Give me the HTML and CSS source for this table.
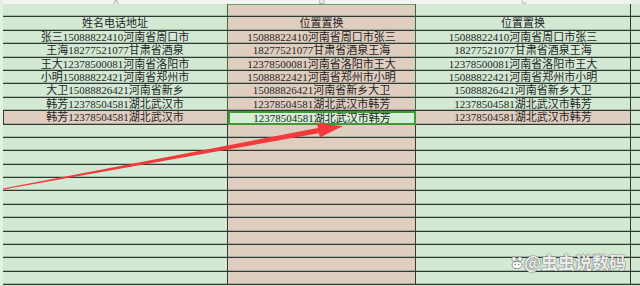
FILE: index.html
```html
<!DOCTYPE html>
<html>
<head>
<meta charset="utf-8">
<link rel="stylesheet" href="styles.css">
</head>
<body>
<div class="page">
  <div class="heads">
    <span class="e"></span>
    <span class="h"><svg width="6" height="4" viewBox="0 0 6 4"><path d="M0.5 4 L3 0 L5.5 4" fill="none" stroke="#a0a0a0" stroke-width="0.9"/></svg></span>
    <span class="h"><svg width="6" height="4" viewBox="0 0 6 4"><path d="M0.8 0 V3.5 H3.8 Q5.3 3.5 5.3 1.8 Q5.3 0.5 4 0" fill="none" stroke="#a0a0a0" stroke-width="0.9"/></svg></span>
    <span class="h"><svg width="6" height="4" viewBox="0 0 6 4"><path d="M0.7 0.5 Q1.5 3.5 3.2 3.5 Q4.6 3.5 5.3 2.2" fill="none" stroke="#a0a0a0" stroke-width="0.9"/></svg></span>
    <span class="e"></span>
  </div>
  <div class="sheet">
    <div class="e"></div><div class="c a hl"></div><div class="c b hl top"></div><div class="c g"></div><div class="c d"></div>
    <div class="e"></div><div class="c a hl">姓名电话地址</div><div class="c b hl">位置置换</div><div class="c g">位置置换</div><div class="c d"></div>
    <div class="e"></div><div class="c a hl">张三15088822410河南省周口市</div><div class="c b hl">15088822410河南省周口市张三</div><div class="c g">15088822410河南省周口市张三</div><div class="c d"></div>
    <div class="e"></div><div class="c a hl">王海18277521077甘肃省酒泉</div><div class="c b hl">18277521077甘肃省酒泉王海</div><div class="c g">18277521077甘肃省酒泉王海</div><div class="c d"></div>
    <div class="e"></div><div class="c a hl">王大12378500081河南省洛阳市</div><div class="c b hl">12378500081河南省洛阳市王大</div><div class="c g">12378500081河南省洛阳市王大</div><div class="c d"></div>
    <div class="e"></div><div class="c a hl">小明15088822421河南省郑州市</div><div class="c b hl">15088822421河南省郑州市小明</div><div class="c g">15088822421河南省郑州市小明</div><div class="c d"></div>
    <div class="e"></div><div class="c a hl">大卫15088826421河南省新乡</div><div class="c b hl">15088826421河南省新乡大卫</div><div class="c g">15088826421河南省新乡大卫</div><div class="c d"></div>
    <div class="e"></div><div class="c a hl">韩芳12378504581湖北武汉市</div><div class="c b hl">12378504581湖北武汉市韩芳</div><div class="c g">12378504581湖北武汉市韩芳</div><div class="c d"></div>
    <div class="e"></div><div class="c a hl tan boxed">韩芳12378504581湖北武汉市</div><div class="c b active">12378504581湖北武汉市韩芳</div><div class="c g tan">12378504581湖北武汉市韩芳</div><div class="c d"></div>
    <div class="e"></div><div class="c a"></div><div class="c b"></div><div class="c g"></div><div class="c d"></div>
    <div class="e"></div><div class="c a"></div><div class="c b"></div><div class="c g"></div><div class="c d"></div>
    <div class="e"></div><div class="c a"></div><div class="c b"></div><div class="c g"></div><div class="c d"></div>
    <div class="e"></div><div class="c a"></div><div class="c b"></div><div class="c g"></div><div class="c d"></div>
    <div class="e"></div><div class="c a"></div><div class="c b"></div><div class="c g"></div><div class="c d"></div>
    <div class="e"></div><div class="c a"></div><div class="c b"></div><div class="c g"></div><div class="c d"></div>
    <div class="e"></div><div class="c a"></div><div class="c b"></div><div class="c g"></div><div class="c d"></div>
    <div class="e"></div><div class="c a"></div><div class="c b"></div><div class="c g"></div><div class="c d"></div>
    <div class="e"></div><div class="c a"></div><div class="c b"></div><div class="c g"></div><div class="c d"></div>
    <div class="e"></div><div class="c a"></div><div class="c b"></div><div class="c g"></div><div class="c d"></div>
    <div class="e"></div><div class="c a"></div><div class="c b"></div><div class="c g"></div><div class="c d"></div>
    <div class="e"></div><div class="c a"></div><div class="c b"></div><div class="c g"></div><div class="c d"></div>
  </div>

  <svg class="arrow" width="640" height="286" viewBox="0 0 640 286">
    <polygon fill="#f23a3c" points="3,189.6 318.9,133.3 319.9,137.6 343,126 317.1,123.6 317.9,128.1 2.9,188.4"/>
  </svg>

  <div class="mark">
    <svg class="paw" width="12" height="13" viewBox="0 0 12 13">
      <circle cx="3" cy="3" r="2.2" fill="#fff" stroke="#777" stroke-width="0.8"/>
      <circle cx="9" cy="3" r="2.2" fill="#fff" stroke="#777" stroke-width="0.8"/>
      <ellipse cx="6" cy="9" rx="5" ry="3.6" fill="#fff" stroke="#777" stroke-width="0.8"/>
      <circle cx="4.4" cy="8.6" r="0.8" fill="#777"/>
      <circle cx="7.6" cy="8.6" r="0.8" fill="#777"/>
    </svg>
    <span class="mtext">@虫虫说数码</span>
  </div>
</div>
</body>
</html>
```

FILE: styles.css
```css
html, body {
  margin: 0;
  padding: 0;
}
body {
  width: 640px;
  height: 286px;
  overflow: hidden;
  background: #d3e9d4;
}
.page {
  position: relative;
  width: 640px;
  height: 286px;
  overflow: hidden;
}
.heads {
  display: grid;
  grid-template-columns: 3px 225px 188px 215px 9px;
  height: 4px;
  overflow: hidden;
  background: #f2f4f2;
}
.heads .h {
  display: flex;
  justify-content: center;
  align-items: flex-start;
  height: 4px;
}
.heads .h svg {
  display: block;
}
.sheet {
  display: grid;
  grid-template-columns: 3px 225px 188px 215px 9px;
  grid-auto-rows: 13.4px;
}
.e {
  background: #e4f0e4;
}
.c {
  box-sizing: border-box;
  border-bottom: 1px solid #2c3a31;
  box-shadow: inset 0 -1px 0 rgba(60, 85, 66, 0.3);
  background: #d3e9d4;
  font-family: "Liberation Serif", "Noto Sans CJK SC", serif;
  font-size: 11px;
  line-height: 12px;
  color: #1f1f1f;
  text-align: center;
  white-space: nowrap;
  overflow: hidden;
}
.a {
  border-right: 1px solid #2f3b32;
}
.b {
  background: #dfcdc0;
  border-right: 1px solid #2f3b32;
}
.g {
  border-right: 1px solid #2f3b32;
}
.hl.a {
  border-right-color: #3e6a3a;
}
.hl.b {
  border-right-color: #3e6a3a;
}
.top {
  box-shadow: inset 0 1px 0 #6fa060, inset 0 -1px 0 rgba(60, 85, 66, 0.3);
}
.tan {
  background: #dfcdc0;
}
.boxed {
  box-shadow: inset 1px 0 0 #3a3a30, inset 0 -1px 0 rgba(60, 85, 66, 0.3);
}
.active {
  background: #d6edd6;
  border: 2px solid #3f9a35;
  box-shadow: none;
  line-height: 10px;
}
.arrow {
  position: absolute;
  left: 0;
  top: 0;
}
.mark {
  position: absolute;
  left: 511px;
  top: 252px;
  display: flex;
  align-items: center;
  gap: 1px;
}
.mtext {
  font-family: "Noto Sans CJK SC", sans-serif;
  font-size: 17px;
  font-weight: 700;
  line-height: 20px;
  color: rgba(255, 255, 255, 0.9);
  text-shadow: 0 0 1px #666, 0 0 1px #666, 0 0 2px rgba(0,0,0,0.3);
}
```
